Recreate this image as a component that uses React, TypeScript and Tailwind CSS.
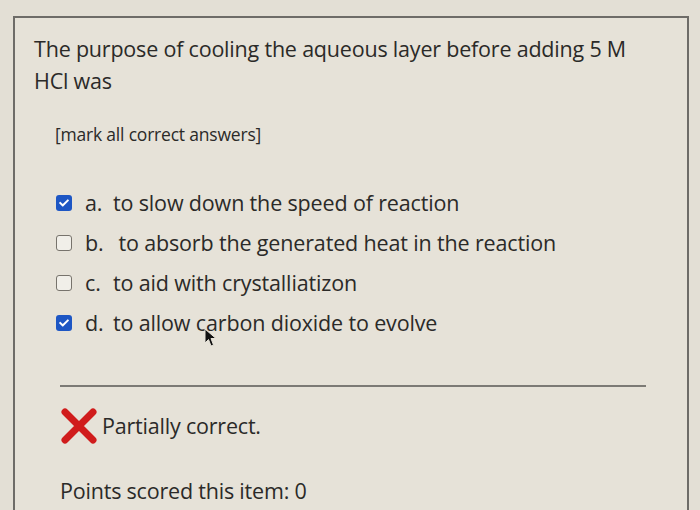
import { FaCheck } from 'react-icons/fa'

type Option = {
  letter: string
  text: string
  checked: boolean
}

const options: Option[] = [
  { letter: 'a.', text: 'to slow down the speed of reaction', checked: true },
  { letter: 'b.', text: ' to absorb the generated heat in the reaction', checked: false },
  { letter: 'c.', text: 'to aid with crystalliatizon', checked: false },
  { letter: 'd.', text: 'to allow carbon dioxide to evolve', checked: true },
]

function CheckBox({ checked }: { checked: boolean }) {
  if (checked) {
    return (
      <span className="flex items-center justify-center w-[16px] h-[16px] rounded-[3px] bg-[#1d56c4] text-white">
        <FaCheck className="w-[10px] h-[10px]" />
      </span>
    )
  }
  return <span className="block w-[16px] h-[16px] rounded-[3px] border-[1.5px] border-[#77736c] bg-[#f1efe9]" />
}

export default function App() {
  return (
    <div
      className="relative w-[700px] h-[510px] overflow-hidden bg-[#e3dfd5] pt-[16px] pl-[13px] text-[#2b2a28]"
      style={{ fontFamily: '"Open Sans", "Liberation Sans", sans-serif' }}
    >
      <div className="w-[676px] h-[520px] border-2 border-[#6e6c68] bg-[#e6e2d8] pl-[19px] pr-[40px]">
        {/* question */}
        <p className="mt-[15px] w-[600px] text-[21.5px] leading-[32px] tracking-[-0.2px]">
          The purpose of cooling the aqueous layer before adding 5 M HCl was
        </p>
        <p className="mt-[24px] ml-[21px] text-[17.5px] tracking-[-0.2px]">[mark all correct answers]</p>

        {/* options */}
        <div className="mt-[42px] ml-[22px] flex flex-col gap-[13px]">
          {options.map((o) => (
            <div key={o.letter} className="flex items-center h-[27px] text-[21.5px] tracking-[-0.15px]">
              <CheckBox checked={o.checked} />
              <span className="ml-[13px] w-[28px]">{o.letter}</span>
              <span className="whitespace-pre">{o.text}</span>
            </div>
          ))}
        </div>

        <div className="mt-[49px] ml-[26px] mr-[1px] h-[1.5px] bg-[#7c7a75]" />

        {/* result */}
        <div className="mt-[21px] ml-[26px] flex items-center">
          <svg width="38" height="36" viewBox="0 0 38 36">
            <path d="M5 4 L33 32 M33 4 L5 32" stroke="#d01c1c" strokeWidth="7" strokeLinecap="round" />
          </svg>
          <span className="ml-[4px] text-[21.5px] tracking-[-0.2px]">Partially correct.</span>
        </div>

        <p className="mt-[31px] ml-[26px] text-[21.5px] tracking-[-0.2px]">Points scored this item: 0</p>
      </div>

      {/* mouse pointer */}
      <svg className="absolute left-[204px] top-[328px]" width="14" height="20" viewBox="0 0 14 20">
        <path d="M1 1 L1 15 L4.5 11.5 L7 18 L9.5 17 L7 10.5 L12 10.5 Z" fill="#111" stroke="#e6e2d8" strokeWidth="1" />
      </svg>
    </div>
  )
}
